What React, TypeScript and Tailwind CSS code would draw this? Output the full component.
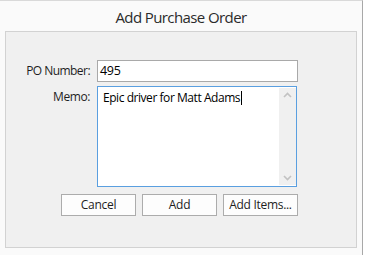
import React from "react";

const font = { fontFamily: '"Open Sans", "Noto Sans", sans-serif' };

export default function App() {
  return (
    <div className="w-[365px] h-[255px] bg-white overflow-hidden" style={font}>
      <div className="w-[363px] h-[255px] bg-[#fafafa] border-t border-r border-t-[#d9d9d9] border-r-[#a8a8a8] flex flex-col">
        <div className="h-[30px] flex items-center justify-center text-[15px] tracking-[-0.6px] text-[#2b2b2b] pt-[2px]">
          Add Purchase Order
        </div>
        <div className="ml-[5px] w-[352px] h-[217px] bg-[#f0f0f0] border border-[#d2d2d2] flex flex-col pt-[28px]">
          <div className="flex items-center h-[22px]">
            <div className="w-[84px] text-right text-[12px] text-[#1e1e1e] leading-none tracking-[-0.55px]">PO Number:</div>
            <div className="ml-[7px] w-[201px] h-[22px] bg-white border border-[#a9a9a9] flex items-center pl-[2px] text-[12.5px] text-black tracking-[-0.3px]">
              495
            </div>
          </div>
          <div className="flex mt-[4px]">
            <div className="w-[84px] text-right text-[12px] text-[#1e1e1e] pt-[3px] leading-[16px] tracking-[-0.4px]">Memo:</div>
            <div className="ml-[7px] w-[200px] h-[101px] bg-white border border-[#5a9fe0] flex">
              <div className="flex-1 pl-[5px] pt-[3px] text-[12px] leading-[16px] text-black tracking-[-0.45px]">
                Epic driver for Matt Adams<span className="inline-block w-[1px] h-[14px] bg-black align-[-3px] ml-[1px]"></span>
              </div>
              <div className="w-[17px] mt-[1px] mb-[1px] bg-[#f0f0f0] flex flex-col justify-between items-center py-[4px]">
                <svg width="9" height="6" viewBox="0 0 9 6">
                  <path d="M1 5 L4.5 1.5 L8 5" stroke="#c2c2c2" strokeWidth="1.6" fill="none" />
                </svg>
                <svg width="9" height="6" viewBox="0 0 9 6">
                  <path d="M1 1 L4.5 4.5 L8 1" stroke="#c2c2c2" strokeWidth="1.6" fill="none" />
                </svg>
              </div>
            </div>
          </div>
          <div className="flex justify-end mt-[7px] w-[292px] gap-[6px]">
            {["Cancel", "Add", "Add Items..."].map((t) => (
              <button
                key={t}
                className="w-[75px] h-[22px] bg-[#fdfdfd] border border-[#acacac] text-[12px] text-[#1e1e1e] tracking-[-0.3px] flex items-center justify-center"
              >
                {t}
              </button>
            ))}
          </div>
        </div>
      </div>
    </div>
  );
}
